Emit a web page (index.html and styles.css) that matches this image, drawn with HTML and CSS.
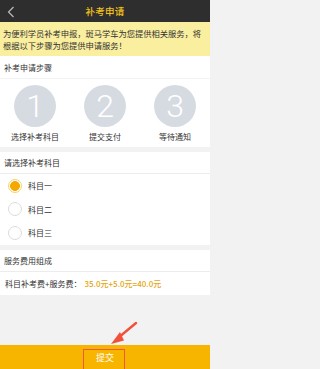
FILE: index.html
```html
<!DOCTYPE html>
<html>
<head>
<meta charset="utf-8">
<link rel="stylesheet" href="styles.css">
</head>
<body>
<div class="page">
  <div class="header">
    <svg class="back" width="8" height="12" viewBox="0 0 8 12"><path d="M6.5 1 L1.5 6 L6.5 11" fill="none" stroke="#bbb" stroke-width="1.2"/></svg>
    <div class="title">补考申请</div>
  </div>
  <div class="notice">为便利学员补考申报，斑马学车为您提供相关服务，将根据以下步骤为您提供申请服务！</div>
  <div class="row head">补考申请步骤</div>
  <div class="steps">
    <div class="step"><div class="circle">1</div><div class="label">选择补考科目</div></div>
    <div class="step"><div class="circle">2</div><div class="label">提交支付</div></div>
    <div class="step"><div class="circle">3</div><div class="label">等待通知</div></div>
  </div>
  <div class="gap"></div>
  <div class="row head line">请选择补考科目</div>
  <div class="opt"><span class="radio on"></span>科目一</div>
  <div class="opt"><span class="radio"></span>科目二</div>
  <div class="opt"><span class="radio"></span>科目三</div>
  <div class="gap"></div>
  <div class="row head line">服务费用组成</div>
  <div class="row fee">科目补考费+服务费：<span class="amt">35.0元+5.0元=40.0元</span></div>
  <div class="fill"></div>
  <div class="footer">
    <span class="submit">提交</span>
    <span class="hl"></span>
  </div>
  <svg class="arrow" width="40" height="40" viewBox="0 0 40 40"><path d="M30 2 L12 17" stroke="#f0513a" stroke-width="2.4" stroke-linecap="round"/><path d="M5 23 L14 11 L18 19.5 Z" fill="#f0513a"/></svg>
</div>
</body>
</html>
```
FILE: styles.css
```css
* { box-sizing: border-box; }
html, body { margin: 0; padding: 0; }
body { font-family: "Noto Sans CJK SC", "Noto Sans", sans-serif; color: #333; background: #f2f2f2; }
.page { width: 210px; height: 369px; display: flex; flex-direction: column; position: relative; overflow: hidden; }
.header { height: 22px; background: #2e2e2e; display: flex; align-items: center; justify-content: center; position: relative; flex: none; }
.back { position: absolute; left: 7px; top: 6px; }
.title { color: #f2c21b; font-size: 9.5px; font-weight: 500; letter-spacing: 0.3px; }
.notice { background: #faee9f; font-size: 8.3px; line-height: 12px; padding: 5px 2px 4px 3px; height: 34px; flex: none; letter-spacing: -0.05px; }
.row { background: #fff; display: flex; align-items: center; flex: none; font-size: 8px; padding-left: 4px; }
.head { height: 22px; }
.line { border-bottom: 1px solid #ececec; }
.steps { background: #fff; display: flex; height: 69px; padding-top: 6px; flex: none; border-top: 1px solid #f3f3f3; }
.step { flex: 1; display: flex; flex-direction: column; align-items: center; }
.circle { width: 42px; height: 42px; border-radius: 50%; background: #d6dbe2; color: #fff; font-family: Roboto, "Open Sans", sans-serif; font-weight: 300; font-size: 32px; line-height: 42px; text-align: center; }
.label { font-size: 8px; margin-top: 4px; color: #333; }
.gap { height: 5px; flex: none; background: #f2f2f2; }
.opt { background: #fff; height: 23.5px; display: flex; align-items: center; font-size: 8px; padding-left: 8px; flex: none; }
.radio { width: 14px; height: 14px; border-radius: 50%; border: 1px solid #dcdcdc; margin-right: 6px; display: inline-block; }
.radio.on { border-color: #f6d46a; background: radial-gradient(circle, #f5a800 0 4.6px, #fff 5.2px); }
.fee { height: 23px; padding-left: 5px; }
.amt { color: #e5a512; margin-left: 3px; font-weight: 500; }
.fill { flex: 1; }
.footer { height: 24px; background: #f7b500; display: flex; justify-content: center; align-items: center; position: relative; flex: none; }
.submit { color: #fff; font-size: 9px; margin-top: 1px; }
.hl { position: absolute; left: 83px; top: 4px; width: 42px; height: 22px; border: 1.5px solid #ef5a3c; }
.arrow { position: absolute; left: 106px; top: 321px; }
```
